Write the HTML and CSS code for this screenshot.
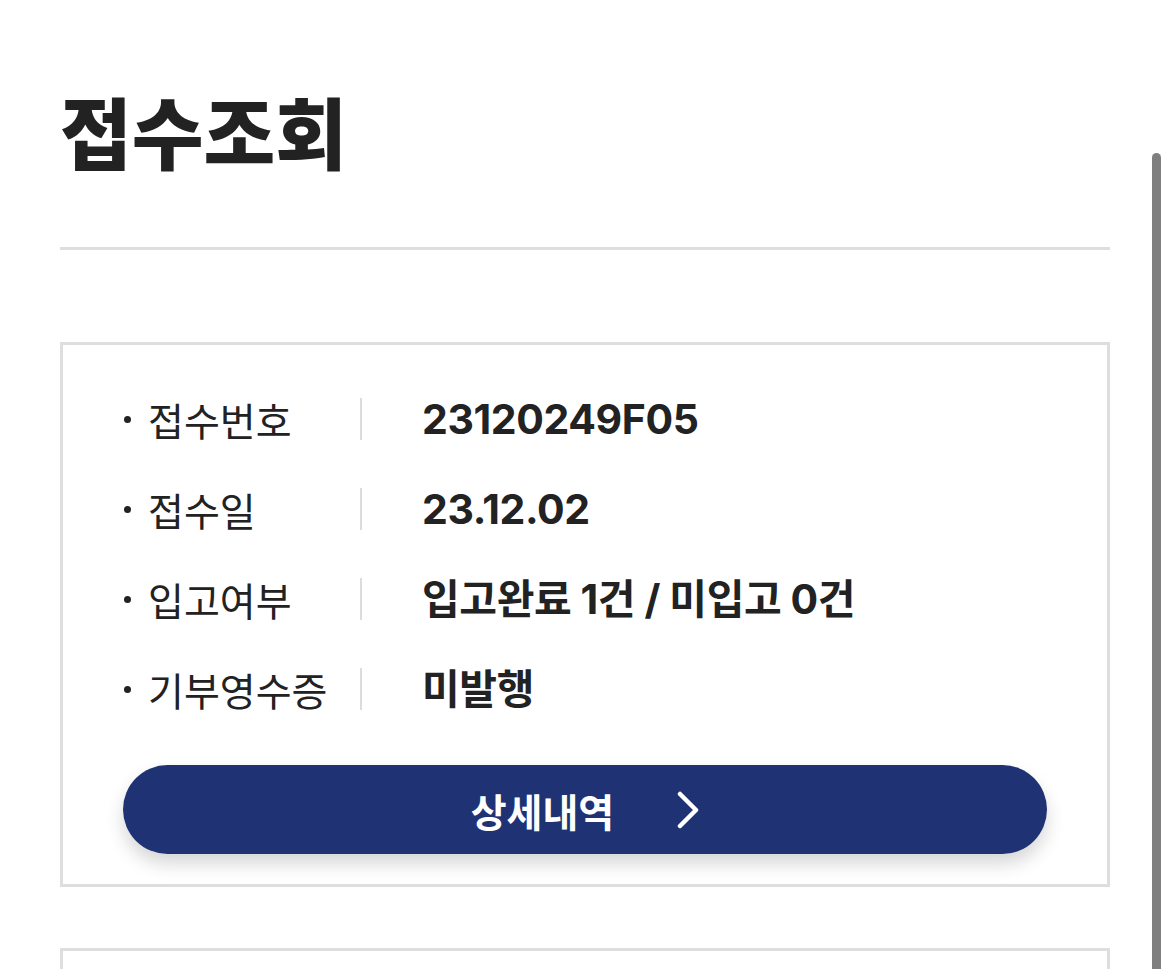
FILE: index.html
```html
<!DOCTYPE html>
<html lang="ko">
<head>
<meta charset="utf-8">
<title>접수조회</title>
<link rel="stylesheet" href="styles.css">
</head>
<body>
<div class="page">
  <header class="page-head">
    <h1 class="page-title">접수조회</h1>
  </header>

  <section class="card">
    <dl class="info">
      <div class="info-row">
        <dt class="info-label">접수번호</dt>
        <dd class="info-value">23120249F05</dd>
      </div>
      <div class="info-row">
        <dt class="info-label">접수일</dt>
        <dd class="info-value">23.12.02</dd>
      </div>
      <div class="info-row">
        <dt class="info-label">입고여부</dt>
        <dd class="info-value">입고완료 1건 / 미입고 0건</dd>
      </div>
      <div class="info-row">
        <dt class="info-label">기부영수증</dt>
        <dd class="info-value">미발행</dd>
      </div>
    </dl>
    <button class="detail-btn" type="button">
      <span class="detail-btn-text">상세내역</span>
      <svg class="detail-btn-icon" width="22" height="38" viewBox="0 0 22 38" aria-hidden="true">
        <polyline points="3,3 19,19 3,35" fill="none" stroke="#fff" stroke-width="4.5" stroke-linecap="round" stroke-linejoin="round"/>
      </svg>
    </button>
  </section>

  <section class="card card-next"></section>
</div>
<div class="scrollbar"></div>
</body>
</html>
```

FILE: styles.css
```css
html, body {
  margin: 0;
  padding: 0;
  overflow: hidden;
  background: #fff;
}

body {
  font-family: "Inter", "Noto Sans CJK KR", sans-serif;
  color: #222;
  height: 969px;
}

.page {
  padding: 0 60px;
}

.page-head {
  height: 247px;
  border-bottom: 3px solid #dedede;
  box-sizing: content-box;
}

.page-title {
  margin: 0;
  padding-top: 80px;
  font-family: "Noto Sans CJK KR", sans-serif;
  font-size: 78px;
  font-weight: 900;
  line-height: 100px;
  color: #222;
  letter-spacing: 0;
}

.card {
  margin-top: 92px;
  border: 3px solid #dedede;
  padding: 29px 60px 30px;
}

.info {
  margin: 0;
}

.info-row {
  display: flex;
  align-items: center;
  height: 90px;
}

.info-label {
  position: relative;
  width: 239px;
  box-sizing: border-box;
  padding-left: 25px;
  font-size: 39px;
  font-weight: 400;
  line-height: 42px;
  color: #222;
  font-family: "Noto Sans CJK KR", sans-serif;
  border-right: 2px solid #dcdcdc;
  margin: 0;
}

.info-label::before {
  content: "";
  position: absolute;
  left: 1px;
  top: 18px;
  width: 7px;
  height: 7px;
  border-radius: 50%;
  background: #222;
}

.info-value {
  margin: 0 0 0 60px;
  font-size: 41px;
  font-weight: 700;
  line-height: 42px;
  color: #222;
  letter-spacing: -0.4px;
}

.detail-btn {
  margin-top: 31px;
  width: 100%;
  height: 89px;
  border: 0;
  border-radius: 45px;
  background: #1f3374;
  box-shadow: 0 10px 18px rgba(0, 0, 0, 0.16);
  display: flex;
  align-items: center;
  justify-content: center;
  gap: 63px;
  color: #fff;
  font-family: "Noto Sans CJK KR", sans-serif;
  font-size: 39px;
  font-weight: 700;
  padding: 0;
  cursor: pointer;
}

.detail-btn-text {
  line-height: 42px;
}

.detail-btn-icon {
  display: block;
}

.card-next {
  margin-top: 61px;
  height: 200px;
  padding: 0;
}

.scrollbar {
  position: fixed;
  left: 1152px;
  top: 153px;
  width: 9px;
  height: 830px;
  border-radius: 5px;
  background: #7f7f7f;
}
```
